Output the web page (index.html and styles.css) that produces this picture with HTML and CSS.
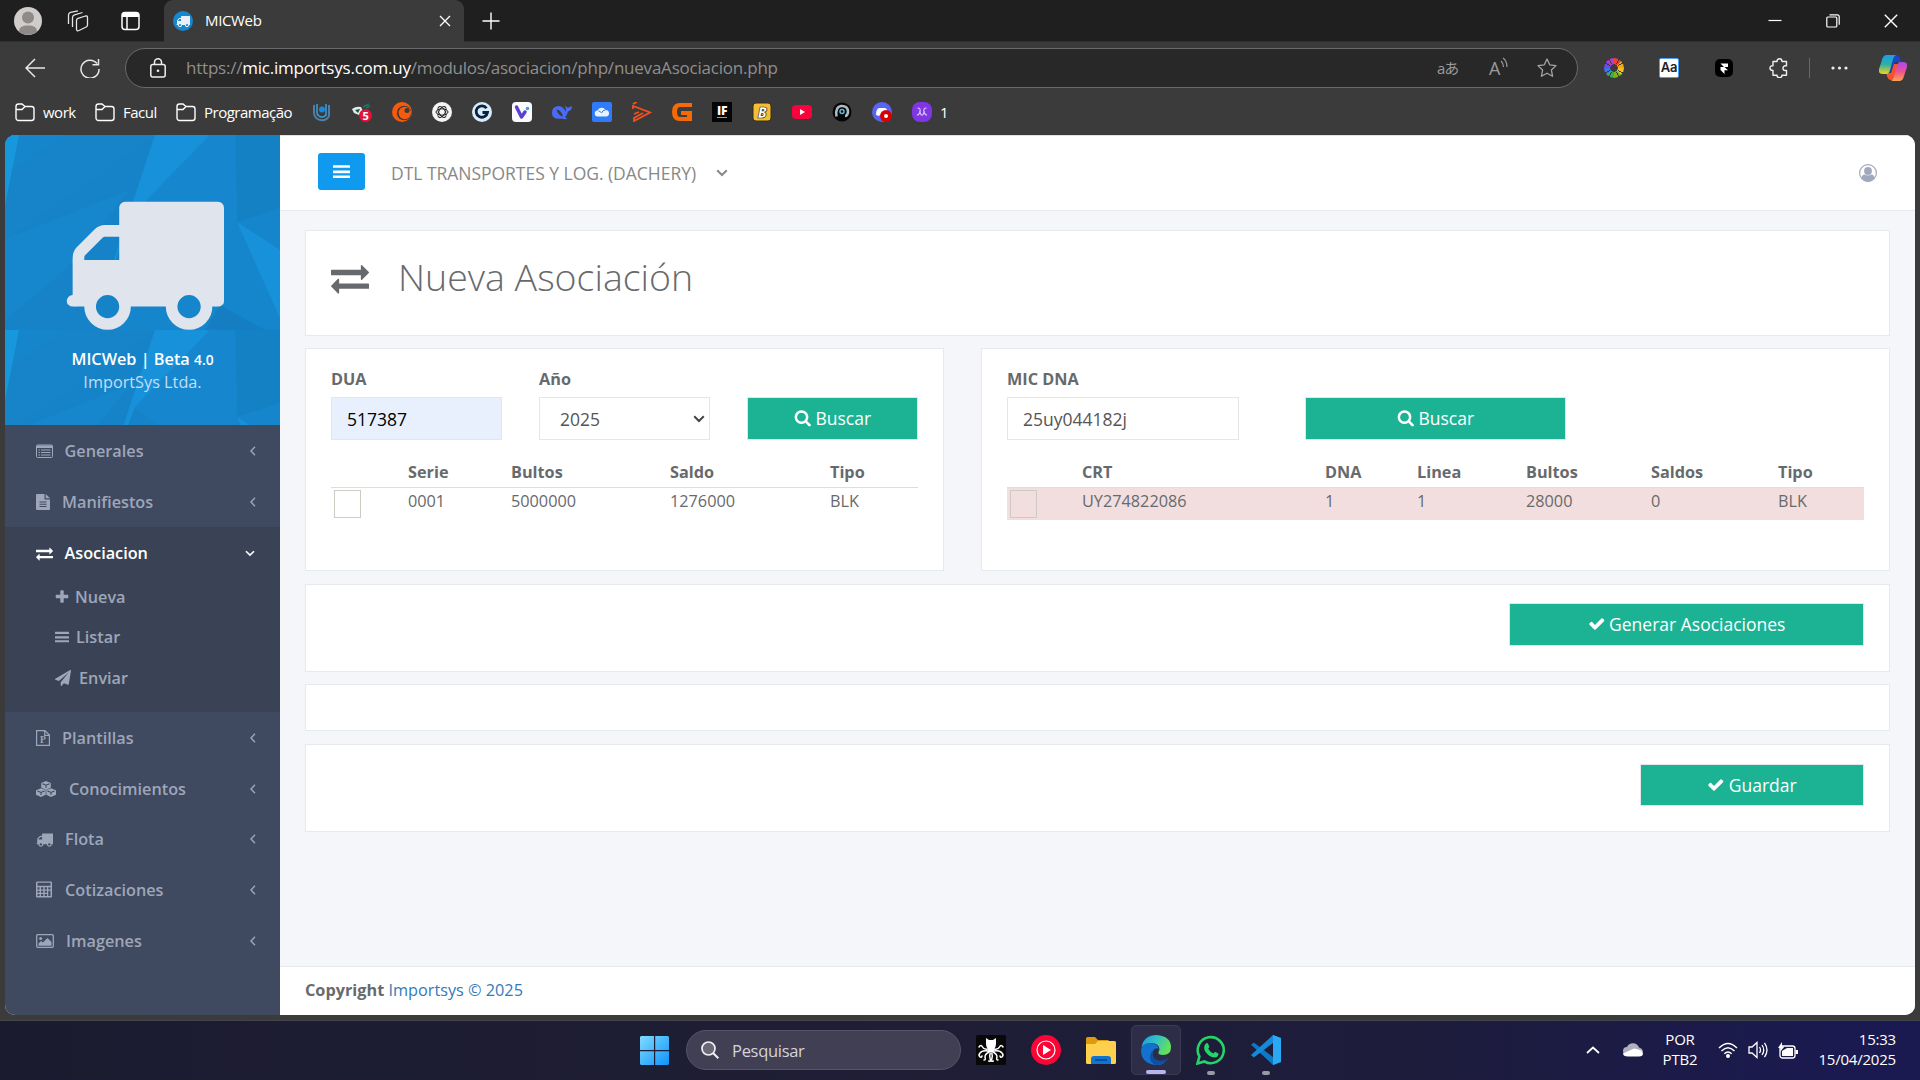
FILE: index.html
```html
<!DOCTYPE html>
<html lang="es">
<head>
<meta charset="utf-8">
<title>MICWeb</title>
<link rel="stylesheet" href="styles.css">
</head>
<body>
<svg class="defs" aria-hidden="true">
  <symbol id="truck" viewBox="0 0 1792 1792"><path d="M640 1408q0-52-38-90t-90-38-90 38-38 90 38 90 90 38 90-38 38-90zm-384-512h384v-256h-158q-13 0-22 9l-195 195q-9 9-9 22v30zm1280 512q0-52-38-90t-90-38-90 38-38 90 38 90 90 38 90-38 38-90zm256-1088v1024q0 15-4 26.500t-13.500 18.500-16.500 11.500-23.500 6-22.500 2-25.500 0-22.500-.5q0 106-75 181t-181 75-181-75-75-181h-384q0 106-75 181t-181 75-181-75-75-181h-64q-3 0-22.500.5t-25.500 0-22.500-2-23.500-6-16.500-11.500-13.500-18.500-4-26.500q0-26 19-45t45-19v-320q0-8-.5-35t0-38 2.500-34.500 6.500-37 14-30.500 22.500-30l198-198q19-19 50.500-32t58.500-13h160v-192q0-26 19-45t45-19h1024q26 0 45 19t19 45z"/></symbol>
  <symbol id="exchange" viewBox="0 0 1792 1792"><path d="M1792 1184v192q0 13-9.500 22.500t-22.500 9.500h-1376v192q0 13-9.500 22.500t-22.500 9.500q-12 0-24-10l-319-320q-9-9-9-22 0-14 9-23l320-320q9-9 23-9 13 0 22.500 9.500t9.500 22.500v192h1376q13 0 22.500 9.500t9.500 22.500zm0-544q0 14-9 23l-320 320q-9 9-23 9-13 0-22.500-9.500t-9.500-22.500v-192h-1376q-13 0-22.500-9.500t-9.500-22.500v-192q0-13 9.500-22.500t22.500-9.500h1376v-192q0-14 9-23t23-9q12 0 24 10l319 319q9 9 9 23z"/></symbol>
  <symbol id="check" viewBox="0 0 1792 1792"><path d="M1671 566q0 40-28 68l-724 724-136 136q-28 28-68 28t-68-28l-136-136-362-362q-28-28-28-68t28-68l136-136q28-28 68-28t68 28l294 295 656-657q28-28 68-28t68 28l136 136q28 28 28 68z"/></symbol>
  <symbol id="search" viewBox="0 0 1792 1792"><path d="M1216 832q0-185-131.500-316.500t-316.500-131.500-316.500 131.500-131.500 316.500 131.500 316.500 316.500 131.500 316.500-131.500 131.500-316.500zm512 832q0 52-38 90t-90 38q-54 0-90-38l-343-342q-179 124-399 124-143 0-273.500-55.500t-225-150-150-225-55.500-273.500 55.500-273.500 150-225 225-150 273.500-55.500 273.500 55.500 225 150 150 225 55.500 273.500q0 220-124 399l343 343q37 37 37 90z"/></symbol>
  <symbol id="plus" viewBox="0 0 1792 1792"><path d="M1600 736v192q0 40-28 68t-68 28h-416v416q0 40-28 68t-68 28h-192q-40 0-68-28t-28-68v-416h-416q-40 0-68-28t-28-68v-192q0-40 28-68t68-28h416v-416q0-40 28-68t68-28h192q40 0 68 28t28 68v416h416q40 0 68 28t28 68z"/></symbol>
  <symbol id="plane" viewBox="0 0 1792 1792"><path d="M1764 11q33 24 27 64l-256 1536q-5 29-32 45-14 8-31 8-11 0-24-5l-453-185-242 295q-18 23-49 23-13 0-22-4-19-7-30.500-23.500t-11.500-36.500v-349l864-1059-1069 925-395-162q-37-14-40-55-2-40 32-59l1664-960q15-9 32-9 20 0 36 11z"/></symbol>
  <symbol id="bars" viewBox="0 0 16 12"><path d="M.5 0h15a.5.5 0 0 1 .5.5v2H0v-2a.5.5 0 0 1 .5-.5zM0 5h16v2.600H0zM0 9.800h16v2.200H0z"/></symbol>
  <symbol id="left" viewBox="0 0 6 10"><path d="M5 .8 1 5l4 4.200" fill="none" stroke="currentColor" stroke-width="1.400"/></symbol>
  <symbol id="down" viewBox="0 0 12 8"><path d="M1.200 1.300 6 6l4.800-4.700" fill="none" stroke="currentColor" stroke-width="2"/></symbol>
  <symbol id="folder" viewBox="0 0 20 20"><path d="M1 4.500a2.500 2.500 0 0 1 2.500-2.500H7l3 2.500h6.500A2.500 2.500 0 0 1 19 7v9a2.500 2.500 0 0 1-2.500 2.500h-13A2.500 2.500 0 0 1 1 16zM1 7.500h6l3-3" fill="none" stroke="currentColor" stroke-width="1.400"/></symbol>
</svg>

<header class="browser">
  <div class="titlebar">
    <svg class="avatar" viewBox="0 0 28 28"><circle cx="14" cy="14" r="14" fill="#cfccc9"/><circle cx="14" cy="10.500" r="6" fill="#8f8a87"/><path d="M5 24.500C5 20 9 18.500 14 18.500s9 1.500 9 6A14 14 0 0 1 5 24.500z" fill="#8f8a87"/></svg>
    <svg class="workspaces" viewBox="0 0 22 22" fill="none" stroke="#e6e6e6" stroke-width="1.300" stroke-linejoin="round"><path d="M11 8.300 18.500 6q2-.5 2 1.500v7.500q0 1.500-1.300 2L12 20.500q-2.500 1-2.500-1.500v-8.500q0-1.700 1.500-2.200zM5.500 17V7.500q0-2 2-2.700L15.500 2.500M1.500 14V5Q1.500 3 3.500 2.400L11 .8"/></svg>
    <svg class="tabmenu" viewBox="0 0 20 20"><rect x="1" y="1.500" width="17" height="17" rx="3" fill="none" stroke="#fff" stroke-width="1.500"/><path d="M1 6V4q0-3 3-3h11q3 0 3 3v2z" fill="#fff"/><path d="M6 6v12" stroke="#fff" stroke-width="1.500"/></svg>
    <div class="tab">
      <span class="tab-icon"><svg viewBox="0 0 1792 1792"><use href="#truck"/></svg></span>
      <span class="tab-title">MICWeb</span>
      <svg class="tab-close" viewBox="0 0 12 12"><path d="m1 1 10 10M11 1 1 11" stroke="#fff" stroke-width="1.300"/></svg>
    </div>
    <svg class="newtab" viewBox="0 0 18 18"><path d="M9 .5v17M.5 9h17" stroke="#fff" stroke-width="1.400"/></svg>
    <div class="winctl">
      <svg width="14" height="14" viewBox="0 0 14 14"><path d="M.5 6.500h13" stroke="#fff" stroke-width="1.200"/></svg>
      <svg width="14" height="14" viewBox="0 0 14 14" fill="none" stroke="#fff" stroke-width="1.200"><rect x=".8" y="3" width="10" height="10" rx="1"/><path d="M3.500.8h7.700q2 0 2 2v8"/></svg>
      <svg width="14" height="14" viewBox="0 0 14 14"><path d="m.8.800 12.400 12.400M13.200.8.800 13.200" stroke="#fff" stroke-width="1.400"/></svg>
    </div>
  </div>

  <div class="toolbar">
    <svg class="back" viewBox="0 0 20 20"><path d="M10 1 1 10l9 9M1 10h19" fill="none" stroke="#e8e8e8" stroke-width="1.500"/></svg>
    <svg class="reload" viewBox="0 0 20 20"><path d="M17 5.500A9 9 0 1 0 19 11M18.500 1v5.800h-6" fill="none" stroke="#e8e8e8" stroke-width="1.500"/></svg>
    <div class="address">
      <svg class="lock" viewBox="0 0 16 20"><rect x=".8" y="6.500" width="14.400" height="12.500" rx="2" fill="none" stroke="#eee" stroke-width="1.500"/><path d="M4.500 6.500V4.300a3.500 3.500 0 0 1 7 0v2.200" fill="none" stroke="#eee" stroke-width="1.500"/><circle cx="8" cy="12.700" r="1.300" fill="#eee"/></svg>
      <span class="url">https://<b>mic.importsys.com.uy</b>/modulos/asociacion/php/nuevaAsociacion.php</span>
      <span class="translate">aあ</span>
      <span class="read"><span>A</span><svg viewBox="0 0 8 12"><path d="M1 4q2.300 2 2.500 6M3 1q4 3 4 9" fill="none" stroke="#9b9b9b" stroke-width="1.200"/></svg></span>
      <svg class="star" viewBox="0 0 20 20"><path d="m10 1 2.700 5.800 6.300.8-4.600 4.400 1.200 6.300L10 15.200l-5.600 3.100L5.600 12 1 7.600l6.300-.8z" fill="none" stroke="#a4a4a4" stroke-width="1.300" stroke-linejoin="round"/></svg>
    </div>
    <div class="extensions">
      <span class="wheel"></span>
      <span class="aa">Aa</span>
      <svg class="fbox" viewBox="0 0 18 18"><rect width="18" height="18" rx="5"/><path d="M5.500 4.500h7.500V8H9.500L13 11.300H9.500V15L5.500 11V8H9L5.500 4.500z" fill="#fff"/></svg>
      <svg class="puzzle" viewBox="0 0 20 20"><path d="M4 3.500h4q0-2.700 2.500-2.700T13 3.500h4.500v4.300h-1.200a2.300 2.300 0 0 0 0 4.700h1.200v4.700H13q0 2.500-2.500 2.500T8 17.200H4v-4.700q-3 0-3-2.500t3-2.200z" fill="none" stroke="#eee" stroke-width="1.400" stroke-linejoin="round"/></svg>
      <i class="divider"></i>
      <svg class="dots" viewBox="0 0 17 4" fill="#eee"><circle cx="2" cy="2" r="1.600"/><circle cx="8.500" cy="2" r="1.600"/><circle cx="15" cy="2" r="1.600"/></svg>
      <svg class="copilot" viewBox="0 0 28 26">
        <defs><linearGradient id="cpa" x1="0" y1="0" x2="0" y2="1"><stop offset="0" stop-color="#1b9bf0"/><stop offset=".5" stop-color="#2fb0a0"/><stop offset="1" stop-color="#f4d21c"/></linearGradient><linearGradient id="cpb" x1="0" y1="0" x2="0" y2="1"><stop offset="0" stop-color="#a24bf0"/><stop offset=".5" stop-color="#ee5094"/><stop offset="1" stop-color="#ffa54c"/></linearGradient></defs>
        <path d="M15 0h2q3 0 4 4l1 3h-6l-5 11-4 1z" fill="#1746c8"/><path d="M7 18l5 0 3-9 6 0-5 16h-4q-3 0-4-4z" fill="#f2542d"/>
        <path d="M8 0h9q-2 1-3 4l-3 11q-1 4-4 4H4q-5 0-4-5l3-9Q4 0 8 0z" fill="url(#cpa)"/>
        <path d="M21 7h3q5 0 4 5l-3 9q-1 5-5 5h-8q2-1 3-4l3-11q1-4 3-4z" fill="url(#cpb)"/>
      </svg>
    </div>
  </div>

  <nav class="bookmarks">
    <span class="bm bm-work"><svg><use href="#folder"/></svg>work</span>
    <span class="bm bm-facul"><svg><use href="#folder"/></svg>Facul</span>
    <span class="bm bm-prog"><svg><use href="#folder"/></svg>Programação</span>
    <div class="favs">
      <svg viewBox="0 0 20 20" fill="none"><path d="M2 3v8a8 8 0 0 0 15 3V3" stroke="#4f7fa6" stroke-width="2"/><path d="M5 2v8a5 5 0 0 0 9 3V2" stroke="#3aa0dc" stroke-width="1.500"/><circle cx="10" cy="7.500" r="3" fill="#168ae0"/></svg>
      <svg viewBox="0 0 20 20"><path d="M0 7q4-3 9-2l2 4-4 4-5-2z" fill="#dfeee9"/><path d="m3 8 5-1-2 4z" fill="#1c4b4a"/><path d="m11 5 6-3M14 6l4-2" stroke="#246f69" stroke-width="1.600"/><circle cx="13.500" cy="13.500" r="6.500" fill="#df143c"/><text x="13.500" y="17.500" text-anchor="middle" font-size="11" font-weight="700" fill="#fff">5</text></svg>
      <svg viewBox="0 0 20 20"><circle cx="10" cy="10" r="10" fill="#f65a0c"/><circle cx="12.200" cy="11" r="7.300" fill="#3b3b3b"/><circle cx="12.800" cy="11" r="6.200" fill="#f65a0c"/><circle cx="15" cy="8.500" r="2.500" fill="#3b3b3b"/></svg>
      <svg viewBox="0 0 20 20"><circle cx="10" cy="10" r="10" fill="#f5f5f5"/><g fill="none" stroke="#222" stroke-width="1"><ellipse cx="10" cy="10" rx="6" ry="3.200"/><ellipse cx="10" cy="10" rx="6" ry="3.200" transform="rotate(60 10 10)"/><ellipse cx="10" cy="10" rx="6" ry="3.200" transform="rotate(120 10 10)"/></g></svg>
      <svg viewBox="0 0 20 20"><circle cx="10" cy="10" r="10" fill="#d8edfb"/><path d="M14.500 6.200A5.700 5.700 0 1 0 15.500 10.500H10.500" fill="none" stroke="#0a2140" stroke-width="2.800"/></svg>
      <svg viewBox="0 0 20 20"><rect width="20" height="20" rx="4" fill="#fafaff"/><path d="m4.500 5 5 10 3.500-5" fill="none" stroke="#5b3fd0" stroke-width="3.500" stroke-linecap="round" stroke-linejoin="round"/><circle cx="15.500" cy="6.500" r="1.800" fill="#35a3ee"/></svg>
      <svg viewBox="0 0 20 20"><path d="M0 11Q0 4 7 4q4 0 7 6 0-4-1-6.500Q15 6 16.500 5.500L20 4q0 4.500-4 5.500-1 4-3 5.500 1 1 2.500 1.500-3 1.300-5.500 0Q0 18 0 11z" fill="#4a6bf5"/><path d="M4.500 7.500q5 1 6.500 7-5-1-6.500-7z" fill="#3b3b3b"/></svg>
      <svg viewBox="0 0 20 20"><rect width="20" height="20" rx="2" fill="#2f7bfa"/><path d="M6 14.500a3 3 0 0 1-.5-6A4.500 4.500 0 0 1 13.500 8a3.300 3.300 0 0 1 1 6.500z" fill="#e8f3ff"/><path d="M6.500 9q2 0 3 2 1-3 4-3" fill="none" stroke="#3a82ee"/></svg>
      <svg viewBox="0 0 20 20" fill="none" stroke="#f4501e" stroke-width="1.800"><path d="m1 2 4-2M1 7V4l17 6.500L2 19v-3l9-5M2 12l5-2"/></svg>
      <svg viewBox="0 0 20 20"><path d="M20 1v4H8Q5 5 5 10t3 5h7v-2H9V9h11v10H8Q0 19 0 10T8 1z" fill="#f56a05"/></svg>
      <svg viewBox="0 0 20 20"><rect width="20" height="20" fill="#050505"/><text x="10" y="13" text-anchor="middle" font-size="12" font-weight="800" fill="#fff" textLength="10">IF</text><path d="M5 15.500h10" stroke="#b39a5b"/></svg>
      <svg viewBox="0 0 20 20"><rect x="1" y="1" width="18" height="18" rx="3" fill="#f4bd36" stroke="#3a2d10"/><text x="10" y="15.500" text-anchor="middle" font-size="15" font-weight="800" fill="#fff" stroke="#2b2518" stroke-width=".7" font-style="italic">B</text></svg>
      <svg viewBox="0 0 20 20"><rect y="3" width="20" height="14" rx="4" fill="#f8033b"/><path d="m8 7 5 3-5 3z" fill="#fff"/></svg>
      <svg viewBox="0 0 20 20"><circle cx="10" cy="10" r="9.500" fill="#060606"/><path d="M4.500 14.500Q3 5 9 4q7-.5 7 6-.500 4-3 4" fill="none" stroke="#aebbc2" stroke-width="2.600"/><circle cx="10" cy="9.500" r="2" fill="none" stroke="#54bce5" stroke-width="1.500"/></svg>
      <svg viewBox="0 0 20 20"><circle cx="10" cy="10" r="10" fill="#5865f2"/><path d="M4 13q0-6 3-7l6 0q3 1 3 7l-3 1-1-1H8l-1 1z" fill="#fff"/><circle cx="14" cy="14" r="6" fill="#d80000"/><circle cx="14" cy="14" r="2" fill="#fff"/></svg>
      <svg viewBox="0 0 20 20"><rect width="20" height="20" rx="8" fill="#8136e6"/><path d="M5.500 6q3.500 0 2.500 4-1 3-3 3M14.500 6Q11 6 12 10q1 3 3 3M7.500 9l2 4.500M12.500 9l-2 4.500" fill="none" stroke="#dccbf8" stroke-width="1.100"/></svg>
    </div>
    <span class="bm-one">1</span>
  </nav>
</header>

<div class="page">
  <aside class="sidebar">
    <div class="brand">
      <svg class="brand-bg" viewBox="0 0 275 290" preserveAspectRatio="none">
        <defs><pattern id="poly" width="275" height="195" patternUnits="userSpaceOnUse">
          <rect width="275" height="195" fill="#1585cc"/>
          <path d="M0 104 150 0H205L102 195H0z" fill="#1683c8"/><path d="M0 104 125 55 60 135 0 185z" fill="#1686cd"/>
          <path d="M60 0h90L0 104V40z" fill="#1784c9"/><path d="M0 0h14L0 70z" fill="#1798dc"/>
          <path d="M150 0h55L130 77l-30 75z" fill="#1791da"/><path d="M205 0h25l2 85-30 50-72-58z" fill="#1687ce"/>
          <path d="M230 0h45v73l-43 14z" fill="#1581c5"/><path d="m232 87 43 28v68z" fill="#1791da"/><path d="m215 170 45 25h-60z" fill="#157ec2"/>
        </pattern></defs>
        <rect width="275" height="290" fill="url(#poly)"/>
      </svg>
      <svg class="brand-truck"><use href="#truck"/></svg>
      <strong class="brand-name">MICWeb | Beta <small>4.0</small></strong>
      <span class="brand-sub">ImportSys Ltda.</span>
    </div>
    <ul class="menu">
      <li><svg class="ic" viewBox="0 0 17 14"><path d="M1.500.5h14q1 0 1 1v10.500q0 1-1 1h-14q-1 0-1-1V1.500q0-1 1-1z" fill="none" stroke="currentColor"/><path d="M1 1h15v2.500H1zM2.500 5H4v1H2.500zM5 5h9.500v1H5zM2.500 7.500H4v1H2.500zM5 7.500h9.500v1H5zM2.500 10H4v1H2.500zM5 10h9.500v1H5z"/></svg><span class="g11">Generales</span><svg class="arr"><use href="#left"/></svg></li>
      <li><svg class="ic doc" viewBox="0 0 14 16"><path fill-rule="evenodd" d="M1 0h7.500v5.500H14V15q0 1-1 1H1q-1 0-1-1V1q0-1 1-1zM3.500 7.500v1h7v-1zm0 2.200v1h7v-1zm0 2.300v1h7v-1z"/><path d="M9.700 0 14 4.300H9.700z"/></svg><span class="g12">Manifiestos</span><svg class="arr"><use href="#left"/></svg></li>
      <li class="active">
        <div class="item"><svg class="ic"><use href="#exchange"/></svg><span class="g11">Asociacion</span><svg class="arr-down"><use href="#down"/></svg></div>
        <ul class="submenu">
          <li><svg width="16" height="16" class="s-plus"><use href="#plus"/></svg>Nueva</li>
          <li><svg width="14" height="12" class="s-bars"><use href="#bars"/></svg>Listar</li>
          <li><svg width="16" height="16" class="s-plane"><use href="#plane"/></svg>Enviar</li>
        </ul>
      </li>
      <li><svg class="ic doc" viewBox="0 0 14 16"><path d="M.6.6h8.300l4.500 4.500v10.300H.6zM8.700.6v4.700h4.700" fill="none" stroke="currentColor" stroke-width="1.200"/><text x="7" y="13" text-anchor="middle" font-family="Liberation Serif, serif" font-weight="700" font-size="9.500">P</text></svg><span class="g12">Plantillas</span><svg class="arr"><use href="#left"/></svg></li>
      <li><svg class="ic cubes" viewBox="0 0 20 16"><path d="m10 0 4.800 2v4.600L10 9 5.200 6.600V2zM5 7.200l4.700 2v4.500L5 16l-5-2.300V9.200zM15 7.200l5 2v4.500L15 16l-4.700-2.300V9.200z"/><path d="M6.500 2.800 10 4.200l3.500-1.400M10 4.200V7M1.500 10 5 11.500 8.500 10M5 11.500V14M11.500 10l3.500 1.500L18.500 10M15 11.500V14" fill="none" stroke="#3f495f" stroke-width="1.100"/></svg><span class="g13">Conocimientos</span><svg class="arr"><use href="#left"/></svg></li>
      <li><svg class="ic"><use href="#truck"/></svg><span class="g12">Flota</span><svg class="arr"><use href="#left"/></svg></li>
      <li><svg class="ic calc" viewBox="0 0 16 16"><path fill-rule="evenodd" d="M1 0h14q1 0 1 1v14q0 1-1 1H1q-1 0-1-1V1q0-1 1-1zm.5 1.300v3h13v-3zm0 4.400V8h2V5.700zm3.500 0V8h2.300V5.700zm3.700 0V8H11V5.700zm3.600 0V8h2.200V5.700zM1.500 9.200v2h2v-2zm3.500 0v2h2.300v-2zm3.700 0v2H11v-2zm3.600 0v5.300h2.200V9.200zM1.500 12.500v2h2v-2zm3.500 0v2h2.300v-2zm3.700 0v2H11v-2z"/></svg><span class="g13">Cotizaciones</span><svg class="arr"><use href="#left"/></svg></li>
      <li><svg class="ic img" viewBox="0 0 18 14"><rect x=".7" y=".7" width="16.600" height="12.600" rx="1" fill="none" stroke="currentColor" stroke-width="1.300"/><circle cx="4.700" cy="4.500" r="1.500"/><path d="M2.500 11.800V9.500L5 7l1.800 1.500L11.500 4l4 4v3.800z"/></svg><span class="g12">Imagenes</span><svg class="arr"><use href="#left"/></svg></li>
    </ul>
  </aside>

  <main class="main">
    <div class="topnav">
      <button class="toggle"><svg><use href="#bars"/></svg></button>
      <span class="company">DTL TRANSPORTES Y LOG. (DACHERY)</span>
      <svg class="company-arrow"><use href="#down"/></svg>
      <svg class="user" viewBox="0 0 18 18"><circle cx="9" cy="9" r="8.400" fill="none" stroke="#9fa8bc" stroke-width="1.200"/><circle cx="9" cy="7" r="3.900" fill="#9fa8bc"/><path d="M2.300 14q.7-3.300 3.500-3.600 3.200 2 6.400 0 2.800.3 3.500 3.600Q13 17.700 9 17.700T2.300 14z" fill="#9fa8bc"/></svg>
    </div>

    <div class="content">
      <section class="card heading">
        <svg><use href="#exchange"/></svg>
        <h1>Nueva Asociación</h1>
      </section>

      <div class="panels">
        <section class="card panel">
          <div class="form form-dua">
            <label>DUA<span class="field filled">517387</span></label>
            <label>Año<span class="field select">2025<svg><use href="#down"/></svg></span></label>
            <button class="btn"><svg><use href="#search"/></svg>Buscar</button>
          </div>
          <div class="table t-dua">
            <div class="tr th"><span></span><span>Serie</span><span>Bultos</span><span>Saldo</span><span>Tipo</span></div>
            <div class="tr"><i class="box"></i><span>0001</span><span>5000000</span><span>1276000</span><span>BLK</span></div>
          </div>
        </section>
        <section class="card panel">
          <div class="form form-mic">
            <label>MIC DNA<span class="field">25uy044182j</span></label>
            <button class="btn"><svg><use href="#search"/></svg>Buscar</button>
          </div>
          <div class="table t-mic">
            <div class="tr th"><span></span><span>CRT</span><span>DNA</span><span>Linea</span><span>Bultos</span><span>Saldos</span><span>Tipo</span></div>
            <div class="tr danger"><i class="box"></i><span>UY274822086</span><span>1</span><span>1</span><span>28000</span><span>0</span><span>BLK</span></div>
          </div>
        </section>
      </div>

      <section class="card actions generate"><button class="btn"><svg><use href="#check"/></svg>Generar Asociaciones</button></section>
      <section class="card empty"></section>
      <section class="card actions save"><button class="btn"><svg><use href="#check"/></svg>Guardar</button></section>
    </div>

    <footer class="footer"><b>Copyright</b> <a>Importsys © 2025</a></footer>
  </main>
</div>

<div class="taskbar">
  <svg class="start" viewBox="0 0 29 29"><defs><linearGradient id="win" x1="0" y1="0" x2="1" y2="1"><stop offset="0" stop-color="#7fdcff"/><stop offset="1" stop-color="#0f93fb"/></linearGradient></defs><path d="M1 0h13v14H0V1zM15.200 0H28l1 1v13H15.200zM0 15.200h14V29H1l-1-1zM15.200 15.200H29V28l-1 1H15.200z" fill="url(#win)"/></svg>
  <div class="tb-search"><svg viewBox="0 0 18 18"><circle cx="7.500" cy="7.500" r="6.500" fill="#6b6876" stroke="#f0f0f4" stroke-width="1.700"/><path d="m12.300 12.300 5 5" stroke="#f0f0f4" stroke-width="2"/></svg>Pesquisar</div>
  <div class="apps">
    <span class="app"><svg viewBox="0 0 30 30"><rect width="30" height="30" rx="1.500" fill="#080808"/><path d="m10 3 3 2h4l3-2v6q0 3-2 5v3h-6v-3q-2-2-2-5z" fill="#fff"/><g fill="none" stroke="#fff" stroke-width="1.500" stroke-linecap="round"><path d="M12 14q-4 1-5.500-2T3 12M18 14q4 1 5.500-2t3.500 0M12 16q-6-1-8 2-2 2 0 4 1.500 1 2-1M18 16q6-1 8 2 2 2 0 4-1.500 1-2-1M13 17q-4 2-4 5 1 3-1 3M17 17q4 2 4 5-1 3 1 3M14.200 18q-1 3 0 6t-1.500 2M15.800 18q1 3 0 6t1.500 2"/></g></svg></span>
    <span class="app"><svg viewBox="0 0 30 30"><circle cx="15" cy="15" r="15" fill="#fb0535"/><circle cx="15" cy="15" r="9" fill="none" stroke="#fff" stroke-width="1.200"/><path d="m12 10 8 5-8 5z" fill="#fff"/></svg></span>
    <span class="app"><svg viewBox="0 0 30 30"><path d="M0 3.500Q0 2 1.500 2H9l3 3h10q1 0 1 1.500V10H0z" fill="#dc9a0c"/><path d="M0 9h9l3-3h16.500Q30 6 30 7.500v20Q30 29 28.500 29h-27Q0 29 0 27.500z" fill="#ffd04d"/><path d="M5 29v-5q0-3 3-3h14q3 0 3 3v5z" fill="#1175cf"/><path d="M9 25h12" stroke="#064a90" stroke-width="1.600"/></svg></span>
    <span class="app current"><svg viewBox="0 0 30 30"><defs><linearGradient id="ea" x1="0" y1="0" x2="1" y2=".4"><stop offset="0" stop-color="#2396d8"/><stop offset=".5" stop-color="#2fc0c9"/><stop offset="1" stop-color="#64e05c"/></linearGradient></defs><path d="M.5 12Q3 0 15.500 0 30 1 30 12.500 30 20 22 20q-5.500 0-4.500-3 2.500-4-1.500-7.500Q9 5.500.5 12z" fill="url(#ea)"/><path d="M0 15Q1 8 8.500 8q8 0 9.500 6-4-2-6 2-2.500 7 5 10.500 3 1.500 7 1Q20 30.500 14 30 0 28 0 15z" fill="#1472cf"/><path d="M11.500 15q-2 9 6 10.500 5 1 10-3Q23.500 30 15 30 5 26 11.500 15z" fill="#0c4fa5"/></svg><i class="mark"></i></span>
    <span class="app"><svg viewBox="0 0 30 30"><path d="M1.500 28.500 3.400 21.500a13 13 0 1 1 5 5z" fill="none" stroke="#25d366" stroke-width="2.600"/><path d="M10 8.500q1.500-1 2.200.5l1 2.500q.2.700-1 2.200 2 3.500 5.300 4.800l1.600-1.700 3.300 1.600q.6 3.600-4 4.200-5.500-.6-9.500-6.600Q7 11.500 10 8.500z" fill="#25d366"/></svg><i class="dot"></i></span>
    <span class="app"><svg viewBox="0 0 30 30"><path d="m22 0 8 3v24l-8 3L2 11.500 0 10l2.800-2.500L22 22z" fill="#0b79c4"/><path d="m22 8L2.800 22.500 0 20 22 0z" fill="#1689d8"/><path d="m22 0 8 3v24l-8 3z" fill="#2aa8f3"/></svg><i class="dot"></i></span>
  </div>
  <div class="tray">
    <svg class="up" viewBox="0 0 14 8"><path d="m1 7 6-5.500L13 7" fill="none" stroke="#fff" stroke-width="1.800"/></svg>
    <svg class="cloud" viewBox="0 0 20 14"><path d="M4 12a4 4 0 0 1 0-8A6.500 6.500 0 0 1 16 4.500q4 1 4 5z" fill="#aeb0c0"/><path d="M5 13.500q-5 0-5-3L11 5.500q8 1 9 5 0 3-4 3z" fill="#fff"/></svg>
    <span class="lang">POR<br>PTB2</span>
    <svg class="wifi" viewBox="0 0 20 16" fill="none" stroke="#fff" stroke-width="1.400"><path d="M1 6q9-9 18 0M3.500 9q6.500-6.500 13 0M6.300 11.800q3.700-3.700 7.400 0"/><circle cx="10" cy="14" r="1.300" fill="#fff"/></svg>
    <svg class="vol" viewBox="0 0 20 18" fill="none" stroke="#fff" stroke-width="1.300"><path d="M1 6h3l5-4.500v15L4 12H1zM11.500 6q2 3 0 6M14 4q3.500 5 0 10M16.500 1.800q5 7.200 0 14.400"/></svg>
    <svg class="bat" viewBox="0 0 20 17"><rect x="2" y="4" width="15" height="12" rx="2.500" fill="none" stroke="#fff" stroke-width="1.300"/><path d="M4 14V9l5-3h6v8zM17.500 8H20v4h-2.500z" fill="#fff"/><path d="M4 0 0 6h2.500L2 10l4.500-5.500H4z" fill="#fff"/></svg>
    <span class="clock">15:33<br>15/04/2025</span>
  </div>
</div>
</body>
</html>
```
FILE: styles.css
```css
* { box-sizing: border-box; }
body { margin: 0; width: 1920px; height: 1080px; overflow: hidden; background: #3b3b3b; font-family: "Open Sans", sans-serif; font-size: 16.25px; color: #676a6c; }
svg { display: block; flex: none; }
svg:not([fill]) { fill: currentColor; }
.defs { position: absolute; width: 0; height: 0; }
button { font-family: inherit; padding: 0; }
ul { list-style: none; margin: 0; padding: 0; }

/* browser chrome */
.browser { height: 135px; color: #fff; font-size: 15px; }
.titlebar { display: flex; align-items: center; height: 42px; background: #1f1f1f; border-bottom: 1px solid #303030; }
.avatar { width: 28px; height: 28px; margin-left: 14px; }
.workspaces { width: 22px; height: 22px; margin-left: 25px; }
.tabmenu { width: 20px; height: 20px; margin-left: 32px; }
.tab { display: flex; align-items: center; width: 300px; height: 42px; margin-left: 23px; padding: 0 13px 0 9px; background: #3b3b3b; border-radius: 9px 9px 0 0; }
.tab-icon { display: flex; align-items: center; justify-content: center; width: 20px; height: 20px; border-radius: 50%; background: #1787cd; color: #e9eef8; }
.tab-icon svg { width: 14px; height: 14px; }
.tab-title { margin-left: 12px; padding-bottom: 2px; letter-spacing: -.35px; line-height: 20px; }
.tab-close { width: 12px; height: 12px; margin-left: auto; }
.newtab { width: 18px; height: 18px; margin-left: 18px; }
.winctl { display: flex; gap: 44px; margin-left: auto; margin-right: 22px; }

.toolbar { display: flex; align-items: center; height: 52px; }
.back { width: 20px; height: 20px; margin-left: 25px; }
.reload { width: 20px; height: 20px; margin-left: 35px; }
.address { display: flex; align-items: center; width: 1453px; height: 40px; margin-left: 25px; border: 1px solid #6a6a6a; border-radius: 20px; background: #282828; }
.lock { width: 16px; height: 20px; margin-left: 24px; }
.url { width: 1230px; margin-left: 20px; padding-bottom: 2px; font-size: 17px; letter-spacing: -.22px; color: #8f8f8f; white-space: nowrap; }
.url b { font-weight: 400; color: #fff; }
.translate { width: 24px; margin-left: 21px; padding-bottom: 1px; font-family: "Open Sans", "Noto Sans CJK JP", sans-serif; font-size: 15px; letter-spacing: -1px; color: #9b9b9b; line-height: 20px; white-space: nowrap; }
.read { display: flex; margin-left: 28px; font-size: 18px; line-height: 22px; color: #9b9b9b; }
.read svg { width: 8px; height: 12px; }
.star { width: 20px; height: 20px; margin-left: 29px; }
.extensions { display: flex; align-items: center; margin-left: 26px; }
.wheel { width: 20px; height: 20px; border-radius: 50%; background: radial-gradient(circle, #3b3b3b 0 3.500px, transparent 4px), repeating-conic-gradient(#3b3b3b 0 3deg, transparent 3deg 27deg, #3b3b3b 27deg 30deg), conic-gradient(#ef4136 0 45deg, #f8a51b 45deg 90deg, #f5c31c 90deg 135deg, #7ab51d 135deg 180deg, #3aae49 180deg 225deg, #3976e8 225deg 270deg, #7148e8 270deg 315deg, #b23ccd 315deg); }
.aa { width: 20px; height: 20px; margin-left: 35px; border: 1px solid #4aa0f5; border-radius: 2px; background: #fff; color: #222; font: 600 13px/17px "Inter", sans-serif; text-align: center; letter-spacing: -.3px; }
.fbox { width: 18px; height: 18px; margin-left: 36px; color: #000; }
.puzzle { width: 20px; height: 20px; margin-left: 36px; }
.divider { width: 1px; height: 20px; margin-left: 20px; background: #686868; }
.dots { width: 17px; height: 4px; margin-left: 21px; }
.copilot { width: 28px; height: 26px; margin-left: 31px; }

.bookmarks { display: flex; align-items: center; height: 36px; letter-spacing: -.5px; }
.bm { display: flex; align-items: center; gap: 8px; line-height: 20px; white-space: nowrap; }
.bm svg { width: 20px; height: 20px; }
.bm-work { width: 80px; margin-left: 15px; }
.bm-facul { width: 81px; }
.bm-prog { width: 136px; }
.favs { display: flex; gap: 20px; }
.favs svg { width: 20px; height: 20px; }
.bm-one { margin-left: 8px; }

/* page frame */
.page { display: flex; width: 1910px; height: 880px; margin-left: 5px; border-radius: 10px; overflow: hidden; background: #f4f6fa; }
.sidebar { width: 275px; background: #3f495f; color: #9ea6b9; font-weight: 600; }
.brand { position: relative; display: flex; flex-direction: column; align-items: center; height: 290px; }
.brand-bg { position: absolute; inset: 0; width: 275px; height: 290px; }
.brand-truck { position: relative; width: 163px; height: 164px; margin-top: 43px; color: #dfe4ed; }
.brand-name { position: relative; margin-top: 6px; line-height: 23px; font-weight: 600; color: #fff; }
.brand-name small { font-size: 13.8px; }
.brand-sub { position: relative; line-height: 23px; font-weight: 400; color: #c5def3; }
.menu > li:not(.active), .item { display: flex; align-items: center; height: 50.900px; padding-left: 31px; padding-right: 24px; }
.menu > li:not(.active):nth-child(-n+5), .item { padding-top: 2px; }
.ic { width: 17px; height: 17px; }
.ic.doc { width: 14px; height: 16px; }
.ic.cubes { width: 20px; height: 16px; }
.ic.calc { width: 16px; height: 17px; }
.ic.img { width: 18px; height: 14px; }
.g11 { margin-left: 11.500px; }
.g12 { margin-left: 12px; }
.g13 { margin-left: 13px; }
.arr { width: 6px; height: 10px; margin-left: auto; }
.arr-down { width: 10px; height: 7px; margin-left: auto; }
.active { height: 185px; background: #3a4356; }
.item { color: #fff; padding-right: 25px; }
.submenu { margin-top: -1px; }
.submenu li { display: flex; align-items: center; height: 40.400px; padding-left: 50px; color: #9ea6b9; }
.s-plus { margin: 0 5px 0 -1px; }
.s-bars { margin-right: 7px; }
.s-plane { margin-right: 8px; }

/* main area */
.main { display: flex; flex-direction: column; width: 1635px; }
.topnav { display: flex; align-items: center; height: 76px; padding: 0 38px; background: #fff; border-top: 1px solid #e2e2e2; border-bottom: 1px solid #e7eaec; }
.toggle { display: flex; align-items: center; justify-content: center; width: 47px; height: 37px; margin-top: -3px; border: 0; border-radius: 3px; background: #0f9af0; color: #fff; }
.toggle svg { width: 17px; height: 13px; }
.company { margin-left: 26px; font-size: 17.500px; letter-spacing: -.03px; color: #888; white-space: nowrap; }
.company-arrow { width: 12px; height: 8px; margin-left: 20px; color: #888; }
.user { width: 18px; height: 18px; margin-left: auto; margin-right: 0; }
.content { display: flex; flex-direction: column; flex: 1; padding: 19px 25px 0; }
.card { background: #fff; border: 1px solid #e7eaec; }
.heading { display: flex; align-items: center; height: 106px; padding: 0 25px; }
.heading svg { width: 38px; height: 38px; margin-top: -11px; }
.heading h1 { margin: -12px 0 0 29px; font-size: 37.500px; font-weight: 300; line-height: 50px; }
.panels { display: grid; grid-template-columns: 639px 909px; justify-content: space-between; margin-top: 12px; height: 223px; }
.panel { padding: 18px 25px 0; }
.form { display: grid; align-items: end; height: 73px; }
.form-dua { grid-template-columns: 171px 171px 171px; gap: 37px; }
.form-mic { grid-template-columns: 232px 261px; gap: 66px; }
.form label { font-weight: 700; line-height: 22px; }
.field { display: flex; align-items: center; height: 43px; margin-top: 7px; padding-left: 15px; border: 1px solid #e5e6e7; font-size: 17.500px; font-weight: 400; color: #555; }
.filled { background: #e8f0fe; color: #000; }
.select { padding: 1px 4px 0 20px; justify-content: space-between; }
.select svg { width: 12px; height: 8px; color: #444; }
.btn { display: flex; align-items: center; justify-content: center; gap: 4px; height: 43px; padding-bottom: 1px; border: 1px solid #e5e6e7; background: #1cb394; color: #fff; font-size: 17.500px; }
.btn svg { width: 17.500px; height: 17.500px; }
.table { margin-top: 19px; }
.tr { display: grid; height: 32px; line-height: 26px; }
.t-dua .tr { grid-template-columns: 77px 103px 159px 160px 88px; }
.t-mic .tr { grid-template-columns: 75px 243px 92px 109px 125px 127px 87px; }
.tr.th { height: 29px; font-weight: 700; border-bottom: 1px solid #ddd; line-height: 27px; }
.danger { background: #f2dede; }
.box { width: 27px; height: 28px; margin: 2px 0 0 3px; border: 1px solid #cecac4; }
.actions { display: flex; justify-content: flex-end; padding-right: 25px; height: 88px; }
.generate { margin-top: 13px; padding-top: 18px; }
.generate .btn { width: 355px; }
.empty { height: 47px; margin-top: 12px; }
.save { margin-top: 13px; padding-top: 19px; }
.save .btn { width: 224px; height: 42px; }
.footer { height: 49px; padding: 11px 25px; line-height: 25px; background: #fff; border-top: 1px solid #e7eaec; }
.footer b { font-weight: 700; }
.footer a { color: #337ab7; }

/* taskbar */
.taskbar { display: flex; align-items: center; height: 60px; margin-top: 5px; padding-bottom: 1px; border-top: 1px solid #44444d; background: linear-gradient(90deg, #1b1b30 0, #1f1e36 50%, #1d1c3c 75%, #1a1a50 95%); color: #fff; font-size: 15px; }
.start { width: 29px; height: 29px; margin-left: 640px; }
.tb-search { display: flex; align-items: center; gap: 13px; width: 275px; height: 40px; margin-left: 17px; padding-left: 14px; border: 1px solid #56546a; border-radius: 20px; background: #403f53; color: #d4d3dc; font-size: 16.500px; letter-spacing: -.3px; }
.tb-search svg { width: 18px; height: 18px; }
.apps { display: flex; gap: 5px; margin-left: 5px; }
.app { position: relative; display: flex; align-items: center; justify-content: center; width: 50px; height: 50px; border-radius: 5px; }
.app svg { width: 30px; height: 30px; }
.current { background: #2e2d47; border: 1px solid #3b3a53; }
.mark, .dot { position: absolute; bottom: 0; left: 50%; height: 4px; border-radius: 2px; transform: translateX(-50%); }
.mark { width: 20px; background: #b9b5ec; }
.dot { width: 8px; background: #9a99a5; }
.tray { display: flex; align-items: center; margin-left: auto; margin-right: 24px; line-height: 20px; letter-spacing: -.2px; }
.up { width: 14px; height: 8px; }
.cloud { width: 20px; height: 14px; margin-left: 23px; }
.lang { width: 40px; margin-left: 17px; padding-bottom: 2px; text-align: center; }
.wifi { width: 20px; height: 16px; margin-left: 18px; }
.vol { width: 20px; height: 18px; margin-left: 10px; }
.bat { width: 20px; height: 17px; margin-left: 10px; }
.clock { width: 90px; margin-left: 8px; padding-bottom: 2px; text-align: right; }
```
